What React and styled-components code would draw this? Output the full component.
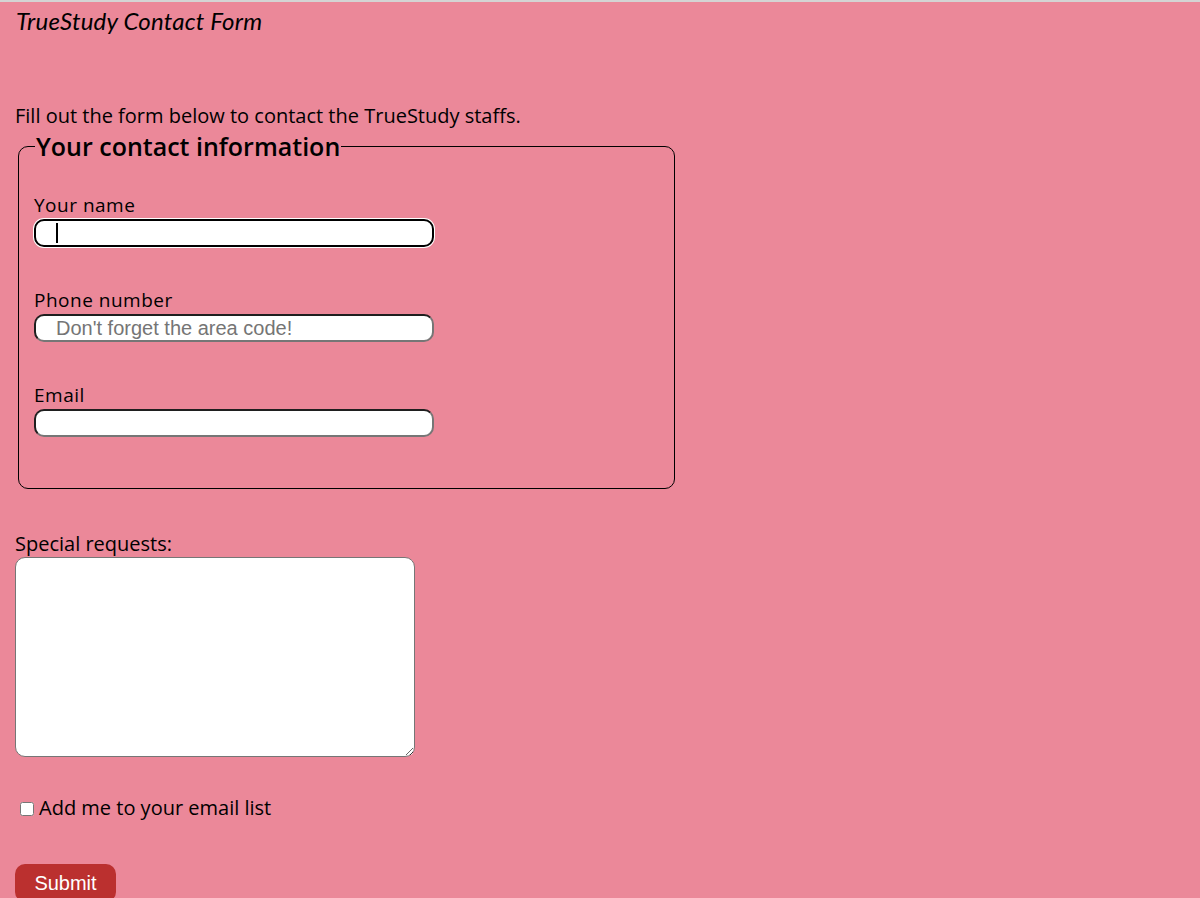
import React from 'react';
import styled, { createGlobalStyle } from 'styled-components';

const GlobalStyle = createGlobalStyle`
  html, body {
    margin: 0;
    padding: 0;
    background: #eb8899;
  }
  body {
    border-top: 2px solid #d4d4d4;
    font-family: "Open Sans", "Noto Sans", sans-serif;
    color: #000;
  }
`;

const Page = styled.div`
  display: flex;
  flex-direction: column;
  align-items: flex-start;
  padding: 0 15px 40px 15px;
`;

const Title = styled.h1`
  margin: 4px 0 0 1px;
  font-family: "Lato", "Open Sans", sans-serif;
  font-style: italic;
  font-weight: 400;
  font-size: 24px;
  line-height: 30px;
  letter-spacing: 0.2px;
`;

const Intro = styled.p`
  margin: 66px 0 0 0;
  font-size: 20px;
  line-height: 27px;
`;

const Form = styled.form`
  display: flex;
  flex-direction: column;
  align-items: flex-start;
`;

const Fieldset = styled.fieldset`
  margin: 2px 0 0 3px;
  width: 657px;
  box-sizing: border-box;
  border: 1px solid #000;
  border-radius: 10px;
  padding: 31px 15px 51px 15px;
  display: flex;
  flex-direction: column;
  gap: 40px;
`;

const Legend = styled.legend`
  font-size: 25px;
  font-weight: 600;
  line-height: 30px;
  padding: 0 1px;
  margin-left: 1px;
`;

const Field = styled.div`
  display: flex;
  flex-direction: column;
  align-items: flex-start;
`;

const Label = styled.label`
  font-size: 19px;
  letter-spacing: 0.5px;
  line-height: 27px;
`;

const InputWrap = styled.div`
  position: relative;
  &::after {
    content: '';
    display: ${(p) => (p.$caret ? 'block' : 'none')};
    position: absolute;
    left: 22px;
    top: 4px;
    width: 2px;
    height: 20px;
    background: #000;
  }
`;

const TextInput = styled.input`
  box-sizing: border-box;
  width: 400px;
  height: 28px;
  border-radius: 10px;
  border-style: solid;
  border-width: 2px;
  border-color: ${(p) => (p.$focused ? '#000' : '#1f1f1f #767676 #767676 #1f1f1f')};
  box-shadow: ${(p) => (p.$focused ? '0 0 0 1px #fff' : 'none')};
  background: #fff;
  padding: 0 20px;
  font-family: "Liberation Sans", Arial, sans-serif;
  font-size: 20px;
  outline: none;

  &::placeholder {
    color: #757575;
  }
`;

const RequestsLabel = styled.label`
  margin-top: 41px;
  font-size: 20px;
  line-height: 27px;
`;

const TextArea = styled.textarea`
  box-sizing: border-box;
  width: 400px;
  height: 200px;
  margin: 0;
  border: 1px solid #767676;
  border-radius: 10px;
  background: #fff;
  font-family: "Liberation Mono", monospace;
`;

const CheckRow = styled.div`
  display: flex;
  align-items: center;
  margin-top: 37px;
  font-size: 20px;
  line-height: 27px;
`;

const CheckBox = styled.input`
  width: 14px;
  height: 14px;
  margin: 2px 5px 0 5px;
`;

const SubmitButton = styled.button`
  margin-top: 43px;
  width: 101px;
  height: 38px;
  border: none;
  border-radius: 10px;
  background: #bb302f;
  color: #fff;
  font-family: "Liberation Sans", Arial, sans-serif;
  font-size: 20px;
  padding: 1px 0 0 0;
`;

export default function App() {
  return (
    <>
      <GlobalStyle />
      <Page>
        <Title>TrueStudy Contact Form</Title>
        <Intro>Fill out the form below to contact the TrueStudy staffs.</Intro>
        <Form onSubmit={(e) => e.preventDefault()}>
          <Fieldset>
            <Legend>Your contact information</Legend>
            <Field>
              <Label htmlFor="name">Your name</Label>
              <InputWrap $caret>
                <TextInput id="name" type="text" $focused />
              </InputWrap>
            </Field>
            <Field>
              <Label htmlFor="phone">Phone number</Label>
              <InputWrap>
                <TextInput id="phone" type="tel" placeholder="Don't forget the area code!" />
              </InputWrap>
            </Field>
            <Field>
              <Label htmlFor="email">Email</Label>
              <InputWrap>
                <TextInput id="email" type="email" />
              </InputWrap>
            </Field>
          </Fieldset>
          <RequestsLabel htmlFor="requests">Special requests:</RequestsLabel>
          <TextArea id="requests" />
          <CheckRow>
            <CheckBox id="list" type="checkbox" />
            <label htmlFor="list">Add me to your email list</label>
          </CheckRow>
          <SubmitButton type="submit">Submit</SubmitButton>
        </Form>
      </Page>
    </>
  );
}
